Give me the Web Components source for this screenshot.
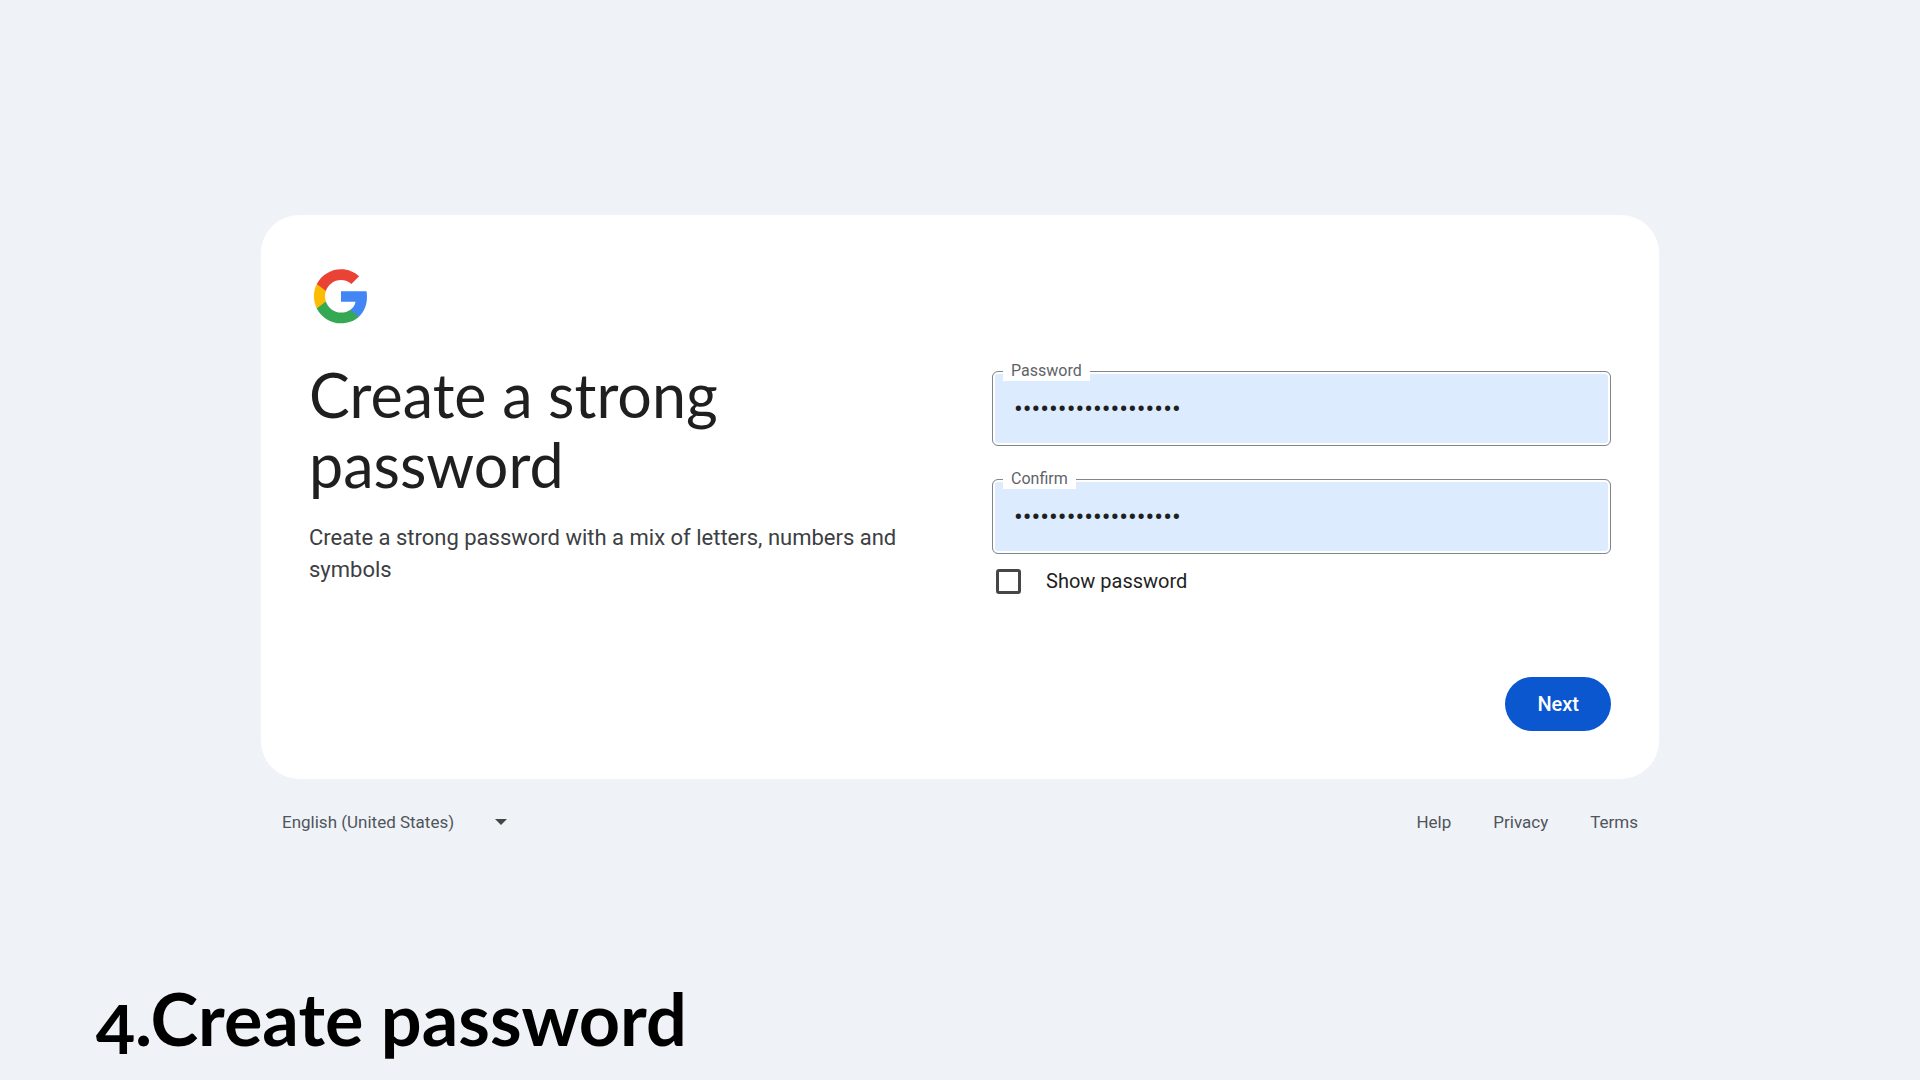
<!DOCTYPE html>
<html lang="en">
<head>
<meta charset="utf-8">
<meta name="viewport" content="width=device-width, initial-scale=1">
<title>Create a strong password</title>
<style>
  body {
    margin: 0;
    background: #eff3f8;
    color: #1f1f1f;
    font-family: Roboto, "Liberation Sans", sans-serif;
  }
</style>
</head>
<body>
<signup-slide>
  <signup-card>
    <google-logo slot="logo"></google-logo>
    <span slot="title">Create a strong password</span>
    <span slot="subtitle">Create a strong password with a mix of letters, numbers and symbols</span>
    <password-form></password-form>
  </signup-card>
  <signup-footer slot="footer">
    <a href="#help">Help</a>
    <a href="#privacy">Privacy</a>
    <a href="#terms">Terms</a>
  </signup-footer>
  <span slot="caption">4.Create password</span>
</signup-slide>

<script>
class GoogleLogo extends HTMLElement {
  constructor() {
    super();
    this.attachShadow({ mode: "open" });
  }

  connectedCallback() {
    this.shadowRoot.innerHTML = /* html */ `
      <style>
        :host {
          display: block;
          width: 64px;
          height: 64px;
        }
        svg {
          display: block;
        }
      </style>
      <svg width="64" height="64" viewBox="-2 -3 52 52" role="img" aria-label="Google">
        <path fill="#4285F4" d="M45.12 24.5c0-1.56-.14-3.06-.4-4.5H24v8.51h11.84c-.51 2.75-2.06 5.08-4.39 6.64v5.52h7.11c4.16-3.83 6.56-9.47 6.56-16.17z"/>
        <path fill="#34A853" d="M24 46c5.94 0 10.92-1.97 14.56-5.33l-7.11-5.52c-1.97 1.32-4.49 2.1-7.45 2.1-5.73 0-10.58-3.87-12.31-9.07H4.34v5.7C7.96 41.07 15.4 46 24 46z"/>
        <path fill="#FBBC05" d="M11.69 28.18C11.25 26.86 11 25.45 11 24s.25-2.86.69-4.18v-5.7H4.34C2.85 17.09 2 20.45 2 24c0 3.55.85 6.91 2.34 9.88l7.35-5.7z"/>
        <path fill="#EA4335" d="M24 10.75c3.23 0 6.13 1.11 8.41 3.29l6.31-6.31C34.91 4.18 29.93 2 24 2 15.4 2 7.96 6.93 4.34 14.12l7.35 5.7c1.73-5.2 6.58-9.07 12.31-9.07z"/>
      </svg>
    `;
  }
}

class PasswordField extends HTMLElement {
  constructor() {
    super();
    this.attachShadow({ mode: "open" });
  }

  connectedCallback() {
    this.shadowRoot.innerHTML = /* html */ `
      <style>
        :host {
          display: block;
          position: relative;
        }
        * {
          box-sizing: border-box;
        }
        input {
          display: block;
          width: 100%;
          height: 75px;
          margin: 0;
          padding: 0 21px;
          border: 1px solid #80868b;
          border-radius: 6px;
          background: #dcecfe;
          box-shadow: inset 0 0 0 2px #fff;
          color: #1f1f1f;
          font: 26px Roboto, sans-serif;
          outline: none;
        }
        /* floats over the top border */
        label {
          position: absolute;
          top: -10px;
          left: 11px;
          padding: 0 8px;
          background: #fff;
          color: #5f6368;
          font-size: 16px;
          line-height: 20px;
        }
      </style>
      <input id="field" type="password">
      <label for="field"></label>
    `;
    this.input = this.shadowRoot.querySelector("input");
    this.input.value = this.getAttribute("value");
    this.shadowRoot.querySelector("label").textContent = this.getAttribute("label");
  }

  reveal(visible) {
    this.input.type = visible ? "text" : "password";
  }
}

class PasswordForm extends HTMLElement {
  constructor() {
    super();
    this.attachShadow({ mode: "open" });
  }

  connectedCallback() {
    this.shadowRoot.innerHTML = /* html */ `
      <style>
        :host {
          display: block;
        }
        form {
          display: flex;
          flex-direction: column;
          height: 100%;
        }
        .fields {
          display: grid;
          gap: 33px;
        }
        .show {
          display: flex;
          align-items: center;
          align-self: flex-start;
          gap: 25px;
          margin-top: 14px;
          padding-left: 4px;
          color: #1f1f1f;
          font-size: 20px;
          line-height: 26px;
        }
        input {
          appearance: none;
          box-sizing: border-box;
          width: 25px;
          height: 25px;
          margin: 0;
          border: 3px solid #444746;
          border-radius: 3px;
        }
        input:checked {
          background: #0b57d0;
        }
        button {
          align-self: flex-end;
          margin-top: auto;
          height: 54px;
          padding: 0 32px;
          border: 0;
          border-radius: 27px;
          background: #0b57d0;
          color: #fff;
          font: 500 20px Roboto, sans-serif;
        }
      </style>
      <form>
        <div class="fields">
          <password-field label="Password" value="correcthorsebattery"></password-field>
          <password-field label="Confirm" value="correcthorsebattery"></password-field>
        </div>
        <label class="show"><input type="checkbox">Show password</label>
        <button type="button">Next</button>
      </form>
    `;
    this.shadowRoot.querySelector("input").addEventListener("change", (e) => {
      this.shadowRoot.querySelectorAll("password-field").forEach((f) => f.reveal(e.target.checked));
    });
  }
}

class SignupCard extends HTMLElement {
  constructor() {
    super();
    this.attachShadow({ mode: "open" });
  }

  connectedCallback() {
    this.shadowRoot.innerHTML = /* html */ `
      <style>
        :host {
          display: block;
          padding: 48px;
          border-radius: 38px;
          background: #fff;
        }
        .columns {
          display: grid;
          grid-template-columns: 1fr 1fr;
          gap: 64px;
          margin-top: 33px;
          min-height: 371px;
        }
        h1 {
          margin: 0;
          max-width: 480px;
          font-family: Lato, sans-serif;
          font-size: 61px;
          line-height: 70px;
          font-weight: 400;
        }
        p {
          margin: 22px 0 0;
          color: #3c4043;
          font-size: 22px;
          line-height: 32px;
        }
        .form {
          display: grid;
          padding-top: 11px;
        }
      </style>
      <slot name="logo"></slot>
      <div class="columns">
        <div>
          <h1><slot name="title"></slot></h1>
          <p><slot name="subtitle"></slot></p>
        </div>
        <div class="form"><slot></slot></div>
      </div>
    `;
  }
}

class SignupFooter extends HTMLElement {
  constructor() {
    super();
    this.attachShadow({ mode: "open" });
  }

  connectedCallback() {
    this.shadowRoot.innerHTML = /* html */ `
      <style>
        :host {
          display: flex;
          justify-content: space-between;
          align-items: center;
          padding: 31px 21px;
          color: #50555a;
          font-size: 17px;
          line-height: 24px;
        }
        .language {
          display: flex;
          align-items: center;
        }
        select {
          appearance: none;
          margin: 0;
          padding: 0 52px 0 0;
          border: 0;
          background: none;
          color: inherit;
          font: inherit;
        }
        svg {
          margin-left: -12px;
          pointer-events: none;
        }
        nav {
          display: flex;
          gap: 42px;
        }
        ::slotted(a) {
          color: inherit;
          text-decoration: none;
        }
      </style>
      <div class="language">
        <select aria-label="Language">
          <option>English (United States)</option>
        </select>
        <svg width="12" height="6" viewBox="0 0 12 6" aria-hidden="true"><path fill="#444746" d="M0 0h12L6 6z"/></svg>
      </div>
      <nav><slot></slot></nav>
    `;
  }
}

class SignupSlide extends HTMLElement {
  constructor() {
    super();
    this.attachShadow({ mode: "open" });
  }

  connectedCallback() {
    this.shadowRoot.innerHTML = /* html */ `
      <style>
        :host {
          display: flex;
          flex-direction: column;
          box-sizing: border-box;
          min-height: 100vh;
          padding: 215px 96px 22px;
        }
        main {
          width: 100%;
          max-width: 1398px;
          margin: 0 auto;
        }
        h2 {
          margin: auto 0 0;
          color: #000;
          font-family: Lato, sans-serif;
          font-size: 72px;
          line-height: 80px;
          font-weight: 700;
          font-variant-numeric: oldstyle-nums;
        }
      </style>
      <main>
        <slot></slot>
        <slot name="footer"></slot>
      </main>
      <h2><slot name="caption"></slot></h2>
    `;
  }
}

customElements.define("google-logo", GoogleLogo);
customElements.define("password-field", PasswordField);
customElements.define("password-form", PasswordForm);
customElements.define("signup-card", SignupCard);
customElements.define("signup-footer", SignupFooter);
customElements.define("signup-slide", SignupSlide);
</script>
</body>
</html>
